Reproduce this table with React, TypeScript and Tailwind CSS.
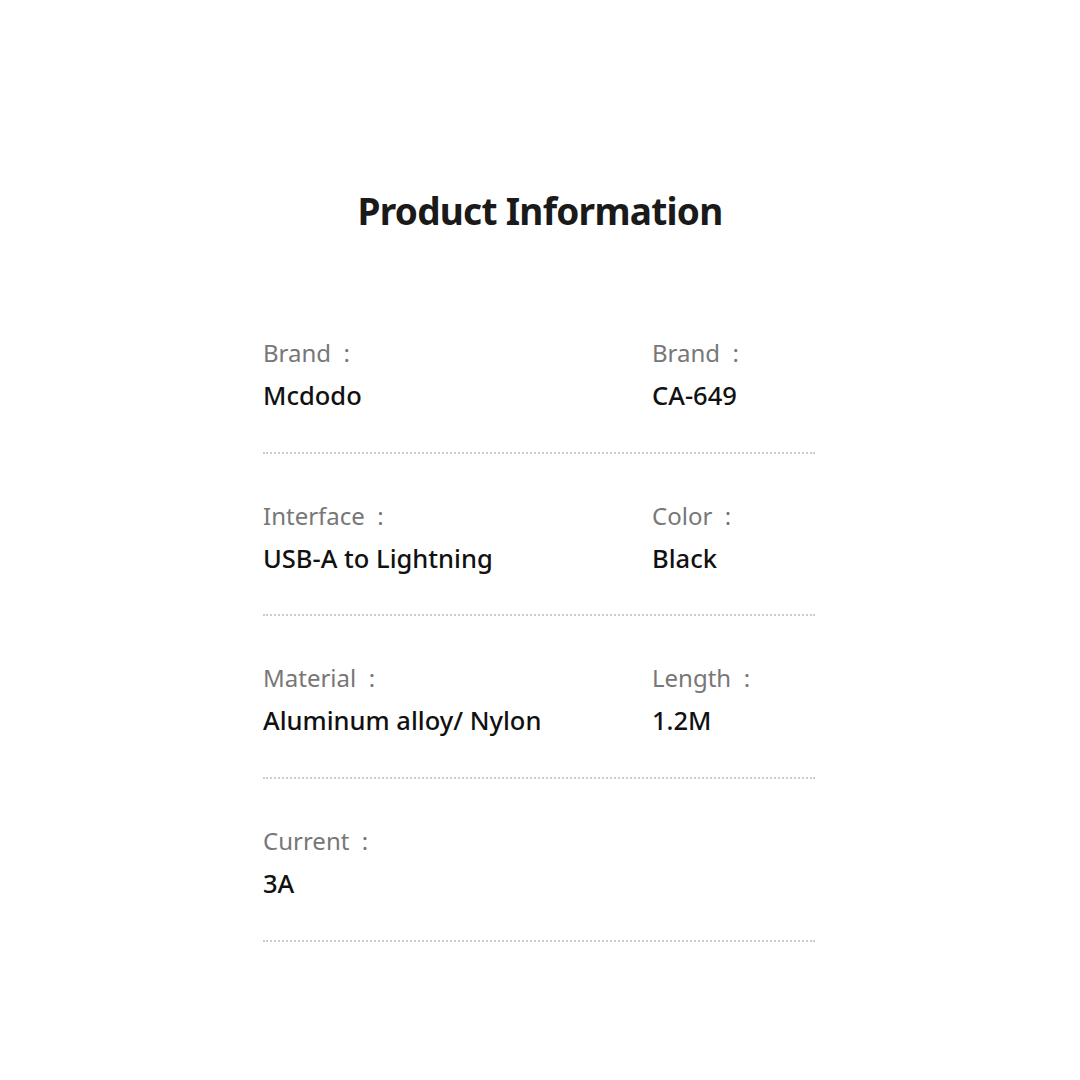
import React from "react";

const rows: [string, string, string?, string?][] = [
  ["Brand", "Mcdodo", "Brand", "CA-649"],
  ["Interface", "USB-A to Lightning", "Color", "Black"],
  ["Material", "Aluminum alloy/ Nylon", "Length", "1.2M"],
  ["Current", "3A"],
];

function Cell({ label, value }: { label?: string; value?: string }) {
  if (!label) return <div />;
  return (
    <div className="flex flex-col">
      <div className="text-[24px] leading-[30px] text-[#777777]">{label}&nbsp;&nbsp;:</div>
      <div className="mt-[12px] text-[25.5px] leading-[30px] font-medium text-[#111111]">{value}</div>
    </div>
  );
}

export default function App() {
  return (
    <div
      className="w-[1080px] h-[1080px] bg-white flex flex-col items-center"
      style={{ fontFamily: '"Noto Sans", "Open Sans", sans-serif' }}
    >
      <h1 className="mt-[186px] text-[37px] leading-[50px] font-bold tracking-[-0.02em] text-[#1a1a1a]">Product Information</h1>
      <div className="mt-[55px] w-[552px] ml-[-2px] flex flex-col">
        {rows.map((r, i) => (
          <div
            key={i}
            className={`grid grid-cols-[389px_1fr] pt-[47px] border-b-2 border-dotted border-[#cccccc] ${i === 1 ? "pb-[41px]" : "pb-[42px]"}`}
          >
            <Cell label={r[0]} value={r[1]} />
            <Cell label={r[2]} value={r[3]} />
          </div>
        ))}
      </div>
    </div>
  );
}
